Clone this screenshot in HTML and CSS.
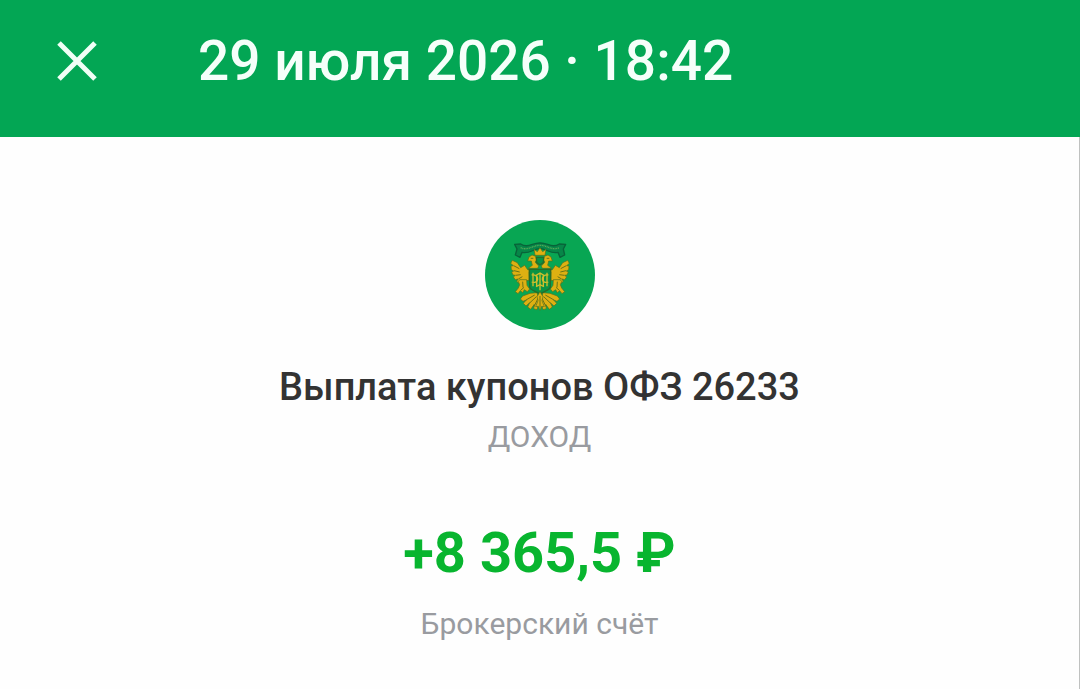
FILE: index.html
```
<!DOCTYPE html>
<html lang="ru">
<head>
    <meta charset="UTF-8">
    <meta name="viewport" content="width=device-width, initial-scale=1.0">
    <title>Выплата купонов ОФЗ 26233</title>
    <link rel="stylesheet" href="styles.css">
</head>
<body>
    <header class="header">
        <button class="close-button" type="button" aria-label="Закрыть">
            <svg viewBox="0 0 40 40" aria-hidden="true">
                <path d="M2 2 L38 38 M38 2 L2 38"/>
            </svg>
        </button>
        <h1 class="header-title">29 июля 2026 · 18:42</h1>
    </header>

    <main class="operation">
        <svg class="logo" viewBox="15 15 330 330" aria-hidden="true">
            <defs>
                <g id="half">
                    <!-- wing feathers -->
                    <path class="gold" d="M158 167 L143 164 L134 151 L122 158 L112 143 L97 136 L92 145 L100 152 L93 153 L94 164 L101 168 L95 171 L99 180 L106 181 L100 186 L106 194 L114 192 L110 199 L117 205 L130 198 L147 196 L147 170 Z"/>
                    <path class="cut" d="M101 152 L118 161 M102 167 L119 171 M107 181 L122 179 M115 192 L127 185"/>
                    <!-- head and neck -->
                    <path class="gold" d="M143 138 L147 126 L156 120 L167 124 L170 135 L165 141 L176 153 L173 160 L145 160 L157 151 L154 138 Z"/>
                    <path class="cut" d="M152 130 L160 130"/>
                    <!-- claw -->
                    <path class="gold" d="M119 194 L140 194 L141 211 L149 222 L142 230 L133 224 L128 233 L121 227 L114 236 L106 230 L115 219 L119 209 L115 200 Z"/>
                    <path class="cut" d="M128 200 L129 217 M122 226 L132 217"/>
                    <!-- side tail feathers -->
                    <path class="gold" d="M171 233 L150 235 L128 243 L121 252 L129 259 L139 255 L130 265 L138 273 L149 263 L143 276 L152 283 L163 268 L161 281 L171 284 L178 257 Z"/>
                    <path class="cut" d="M164 240 L138 255 M169 245 L149 264 M174 250 L162 275"/>
                </g>
            </defs>
            <circle class="disc" cx="180" cy="180" r="165"/>
            <path class="ribbon" d="M104 88 L122 87 C143 101 158 83 180 84 C202 83 217 101 238 87 L257 88 L250 102 L254 120 L240 127 L234 112 C215 118 199 102 180 101 C161 102 145 118 126 112 L120 127 L106 120 L111 102 Z"/>
            <path class="ribbon-text" d="M122 98 C144 108 158 91 180 91 C202 91 216 108 238 98"/>
            <use href="#half"/>
            <use href="#half" transform="translate(360 0) scale(-1 1)"/>
            <path class="gold" d="M165 121 L162 103 L172 110 L180 98 L188 110 L198 103 L195 121 Z"/>
            <path class="shield" d="M169 127 L191 127 L190 143 L180 150 L170 143 Z"/>
            <path class="shield" d="M148 163 L212 163 L211 216 C208 229 190 226 180 238 C170 226 151 229 149 216 Z"/>
            <!-- monogram on the shield -->
            <path class="monogram" d="M167 182 L180 174 L193 182 M180 174 L180 226 M159 173 L159 214 M201 173 L201 214 M170 180 L170 214 M190 180 L190 214"/>
            <path class="monogram" d="M155 180 C166 178 174 185 173 193 C172 201 163 204 155 201 M205 180 C194 178 186 185 187 193 C188 201 197 204 205 201 M168 215 L180 209 L192 215"/>
            <path class="gold" d="M180 230 L189 245 L186 257 L193 275 L185 274 L180 286 L175 274 L167 275 L174 257 L171 245 Z"/>
            <path class="cut" d="M180 243 L180 278"/>
        </svg>
        <h2 class="name">Выплата купонов ОФЗ 26233</h2>
        <p class="type">ДОХОД</p>
        <p class="amount">+8 365,5 ₽</p>
        <p class="account">Брокерский счёт</p>
    </main>
</body>
</html>
```
FILE: styles.css
```
* {
    box-sizing: border-box;
}
body {
    font-family: Roboto, "Liberation Sans", sans-serif;
    background: #fefefe;
    color: #333;
    margin: 0;
    min-height: 100vh;
    display: flex;
    flex-direction: column;
}
.header {
    display: flex;
    align-items: center;
    gap: 96px;
    background: #03a654;
    color: #f5fffa;
    padding: 29px 52px 44px;
}
.close-button {
    display: flex;
    background: none;
    border: none;
    padding: 5px;
    cursor: pointer;
}
.close-button svg {
    width: 40px;
    height: 40px;
    fill: none;
    stroke: #f0fff6;
    stroke-width: 5;
}
.header-title {
    font-size: 55px;
    font-weight: 500;
    line-height: 64px;
    margin: 0;
}
.operation {
    flex: 1;
    display: flex;
    flex-direction: column;
    align-items: center;
    border-right: 1px solid #bfc1c0;
    padding: 83px 24px 40px;
    text-align: center;
}
.logo {
    width: 110px;
    height: 110px;
}
.name {
    font-size: 38px;
    font-weight: 500;
    line-height: 48px;
    margin: 33px 0 0;
}
.type,
.account {
    color: #999ba0;
    font-size: 30px;
    line-height: 40px;
    margin: 0;
}
.type {
    margin-top: 6px;
}
.amount {
    color: #08b52f;
    font-size: 56px;
    font-weight: 700;
    line-height: 64px;
    margin: 64px 0 19px;
}
.disc {
    fill: #08a653;
}
.gold {
    fill: #deb012;
    stroke: #54701c;
    stroke-width: 2;
    stroke-linejoin: round;
}
.cut {
    fill: none;
    stroke: #6b7417;
    stroke-width: 3;
}
.ribbon {
    fill: #078648;
    stroke: #086339;
    stroke-width: 4;
    stroke-linejoin: round;
}
.ribbon-text {
    fill: none;
    stroke: #5dab58;
    stroke-width: 4;
    stroke-dasharray: 3 2;
}
.shield {
    fill: #099344;
    stroke: #286c28;
    stroke-width: 4;
}
.monogram {
    fill: none;
    stroke: #d0bf2c;
    stroke-width: 4;
}
```
